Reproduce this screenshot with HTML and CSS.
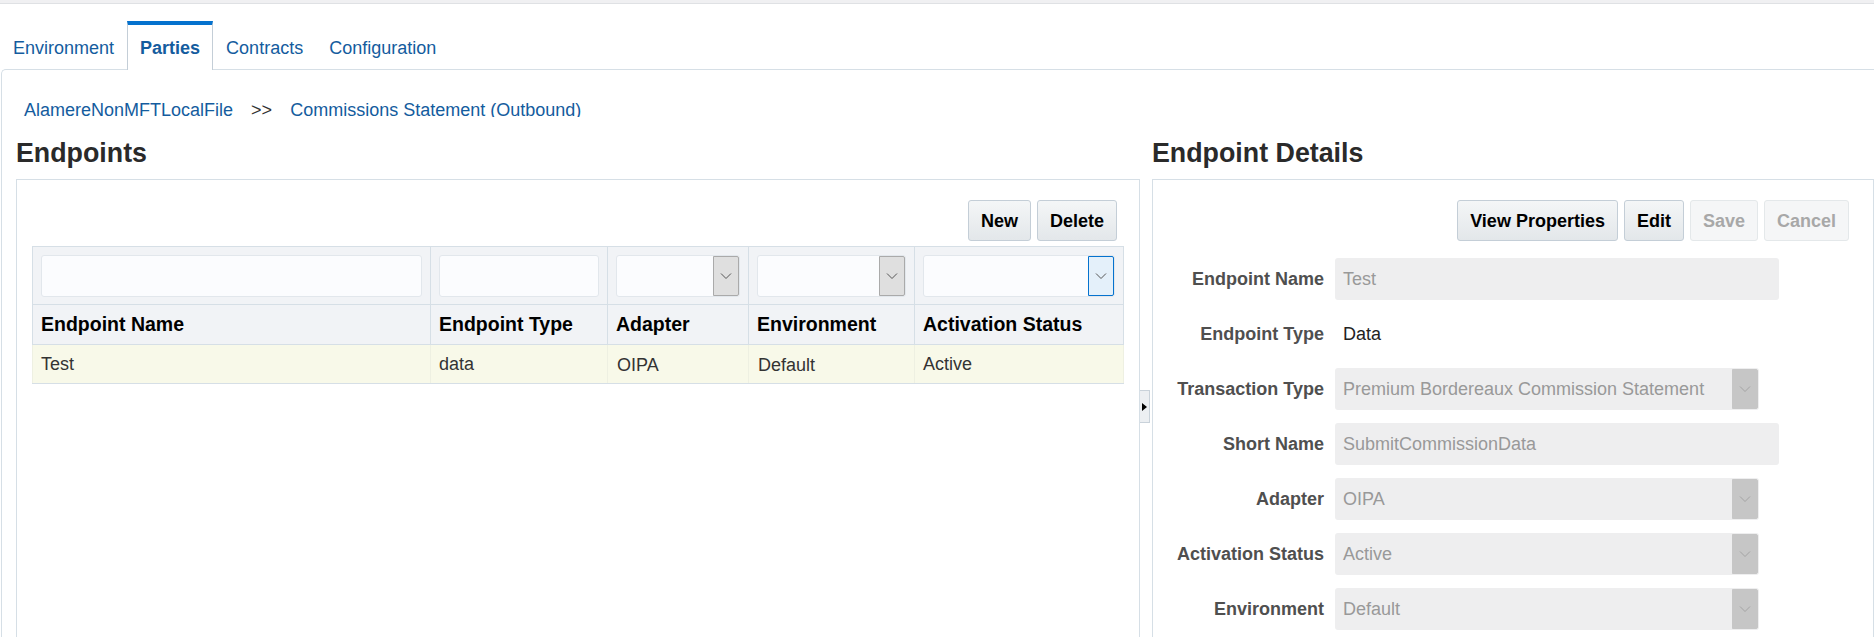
FILE: index.html
```html
<!DOCTYPE html>
<html>
<head>
  <meta charset="UTF-8" />
  <title>Endpoints</title>
  <link rel="stylesheet" href="styles.css">
</head>
<body>
  <div class="top-strip"></div>

  <ul class="tabs">
    <li><a href="#">Environment</a></li>
    <li class="active"><a href="#">Parties</a></li>
    <li><a href="#">Contracts</a></li>
    <li><a href="#">Configuration</a></li>
  </ul>

  <div class="panel">
    <div class="crumbs">
      <a href="#">AlamereNonMFTLocalFile</a>
      <span class="crumb-sep">&gt;&gt;</span>
      <a href="#">Commissions Statement (Outbound)</a>
    </div>

    <div class="split">
      <div class="left-side">
        <h2>Endpoints</h2>
        <div class="box">
          <div class="toolbar left-toolbar">
            <button class="btn">New</button>
            <button class="btn">Delete</button>
          </div>
          <table class="grid">
            <colgroup>
              <col class="col-name"><col class="col-type"><col class="col-adapter"><col class="col-env"><col class="col-status">
            </colgroup>
            <tr class="filter-row">
              <td><div class="filter"></div></td>
              <td><div class="filter"></div></td>
              <td><div class="filter"><span class="drop"><svg viewBox="0 0 12 8"><polyline points="1,1.5 6,6.5 11,1.5"/></svg></span></div></td>
              <td><div class="filter"><span class="drop"><svg viewBox="0 0 12 8"><polyline points="1,1.5 6,6.5 11,1.5"/></svg></span></div></td>
              <td><div class="filter"><span class="drop focus"><svg viewBox="0 0 12 8"><polyline points="1,1.5 6,6.5 11,1.5"/></svg></span></div></td>
            </tr>
            <tr class="head-row">
              <th>Endpoint Name</th>
              <th>Endpoint Type</th>
              <th>Adapter</th>
              <th>Environment</th>
              <th>Activation Status</th>
            </tr>
            <tr class="data-row">
              <td>Test</td>
              <td>data</td>
              <td class="low">OIPA</td>
              <td class="low">Default</td>
              <td>Active</td>
            </tr>
          </table>
        </div>
      </div>

      <div class="gutter"><div class="handle"><i></i></div></div>

      <div class="right-side">
        <h2>Endpoint Details</h2>
        <div class="box">
          <div class="toolbar right-toolbar">
            <button class="btn">View Properties</button>
            <button class="btn">Edit</button>
            <button class="btn off">Save</button>
            <button class="btn off">Cancel</button>
          </div>
          <div class="form">
            <div class="form-row">
              <label>Endpoint Name</label>
              <div class="field">Test</div>
            </div>
            <div class="form-row">
              <label>Endpoint Type</label>
              <div class="plain">Data</div>
            </div>
            <div class="form-row">
              <label>Transaction Type</label>
              <div class="field select">Premium Bordereaux Commission Statement<span class="drop off"><svg viewBox="0 0 12 8"><polyline points="1,1.5 6,6.5 11,1.5"/></svg></span></div>
            </div>
            <div class="form-row">
              <label>Short Name</label>
              <div class="field">SubmitCommissionData</div>
            </div>
            <div class="form-row">
              <label>Adapter</label>
              <div class="field select">OIPA<span class="drop off"><svg viewBox="0 0 12 8"><polyline points="1,1.5 6,6.5 11,1.5"/></svg></span></div>
            </div>
            <div class="form-row">
              <label>Activation Status</label>
              <div class="field select">Active<span class="drop off"><svg viewBox="0 0 12 8"><polyline points="1,1.5 6,6.5 11,1.5"/></svg></span></div>
            </div>
            <div class="form-row">
              <label>Environment</label>
              <div class="field select">Default<span class="drop off"><svg viewBox="0 0 12 8"><polyline points="1,1.5 6,6.5 11,1.5"/></svg></span></div>
            </div>
          </div>
        </div>
      </div>
    </div>
  </div>
</body>
</html>
```

FILE: styles.css
```css
* {
  margin: 0;
  padding: 0;
  box-sizing: border-box;
}
html, body {
  height: 637px;
  overflow: hidden;
}
body {
  display: flex;
  flex-direction: column;
  background: white;
  font-family: "Liberation Sans", Arial, sans-serif;
  font-size: 18px;
  color: #333;
}
a {
  color: #145c9e;
  text-decoration: none;
}
.top-strip {
  height: 4px;
  background: #f0f0f2;
  border-bottom: 1px solid #dfe1e4;
}

/* tabs */
.tabs {
  display: flex;
  list-style: none;
  margin-top: 17px;
  margin-bottom: -1px;
  height: 49px;
  position: relative;
  z-index: 1;
}
.tabs li {
  padding: 0 12px;
  font-size: 18px;
  line-height: 46px;
  border-top: 4px solid transparent;
  border-left: 1px solid transparent;
  border-right: 1px solid transparent;
}
.tabs li.active {
  border-top-color: #0572ce;
  border-left-color: #c4ced7;
  border-right-color: #c4ced7;
  background: white;
  font-weight: bold;
}

.panel {
  flex: 1;
  min-height: 0;
  display: flex;
  flex-direction: column;
  margin-left: 1px;
  border-top: 1px solid #d6dfe6;
  border-left: 1px solid #d6dfe6;
  border-top-left-radius: 5px;
}
.crumbs {
  height: 47px;
  padding: 30px 0 0 22px;
  overflow: hidden;
  line-height: 20px;
  flex: none;
}
.crumb-sep {
  margin: 0 13px;
  color: #333;
}

.split {
  flex: 1;
  min-height: 0;
  display: flex;
}
.left-side {
  width: 1124px;
  margin-left: 14px;
  display: flex;
  flex-direction: column;
}
.right-side {
  flex: 1;
  display: flex;
  flex-direction: column;
}
h2 {
  height: 62px;
  padding-top: 20px;
  font-size: 26.8px;
  line-height: 32px;
  color: #2a2a2a;
  flex: none;
}
.box {
  flex: 1;
  border: 1px solid #d6dfe6;
  border-bottom: none;
  padding-top: 20px;
}

.toolbar {
  display: flex;
  justify-content: flex-end;
  gap: 6px;
}
.left-toolbar {
  padding-right: 22px;
  margin-bottom: 5px;
}
.right-toolbar {
  padding-right: 24px;
  margin-bottom: 17px;
}
.btn {
  height: 41px;
  padding: 2px 12px 0;
  border: 1px solid #c4ced7;
  border-radius: 3px;
  background: linear-gradient(#f4f6f7, #e3e7ea);
  font-family: inherit;
  font-size: 18px;
  font-weight: bold;
  color: #000;
}
.btn.off {
  background: #f5f6f7;
  border-color: #e4e8ea;
  color: #a8a8a8;
}

/* endpoints table */
.grid {
  width: 1091px;
  margin-left: 15px;
  border-collapse: collapse;
  table-layout: fixed;
}
.col-name { width: 398px; }
.col-type { width: 177px; }
.col-adapter { width: 141px; }
.col-env { width: 166px; }
.col-status { width: 209px; }
.grid td, .grid th {
  border: 1px solid #d6dfe6;
  padding: 0 8px;
  text-align: left;
}
.filter-row td {
  height: 58px;
  background: #f1f3f6;
}
.filter {
  height: 42px;
  background: #fbfcfe;
  border: 1px solid #e2e7ec;
  border-radius: 3px;
  display: flex;
  justify-content: flex-end;
}
.head-row th {
  height: 40px;
  background: #f1f3f6;
  font-size: 19.5px;
  color: #000;
}
.grid .data-row td {
  height: 39px;
  padding-top: 1px;
  background: #f8f9e9;
  border-left-color: #eef0e2;
  border-right-color: #eef0e2;
}
.grid .data-row td.low {
  padding: 3px 0 0 9px;
}
.drop {
  width: 26px;
  background: #dfdfdf;
  border: 1px solid #aaa;
  border-radius: 0 2px 2px 0;
  display: flex;
  align-items: center;
  justify-content: center;
  flex: none;
}
.drop svg {
  width: 12px;
  height: 8px;
  fill: none;
  stroke: #555;
  stroke-width: 1;
}
.drop.focus {
  background: #e4f0fa;
  border-color: #0572ce;
}
.drop.off {
  background: #c6c6c6;
  border-color: #c6c6c6;
  height: 40px;
  margin: 1px 1px 1px auto;
}
.drop.off svg {
  stroke: #a4a4a4;
}

.gutter {
  width: 12px;
  flex: none;
}
.handle {
  width: 10px;
  height: 33px;
  margin-top: 273px;
  background: #eceff2;
  border: 1px solid #c9d2da;
  border-left: none;
  display: flex;
  align-items: center;
  justify-content: center;
}
.handle i {
  border-left: 5px solid #000;
  border-top: 4.5px solid transparent;
  border-bottom: 4.5px solid transparent;
}

/* details form */
.form {
  display: flex;
  flex-direction: column;
  gap: 13px;
}
.form-row {
  display: flex;
  align-items: center;
  height: 42px;
}
.form-row label {
  width: 171px;
  margin-right: 11px;
  padding-top: 1px;
  text-align: right;
  font-weight: bold;
  color: #4f4f4f;
  flex: none;
}
.field {
  width: 444px;
  height: 42px;
  padding-left: 8px;
  background: #eeeeef;
  border-radius: 3px;
  line-height: 43px;
  color: #999;
}
.field.select {
  width: 424px;
  display: flex;
}
.plain {
  padding: 1px 0 0 8px;
  color: #222;
}
```
